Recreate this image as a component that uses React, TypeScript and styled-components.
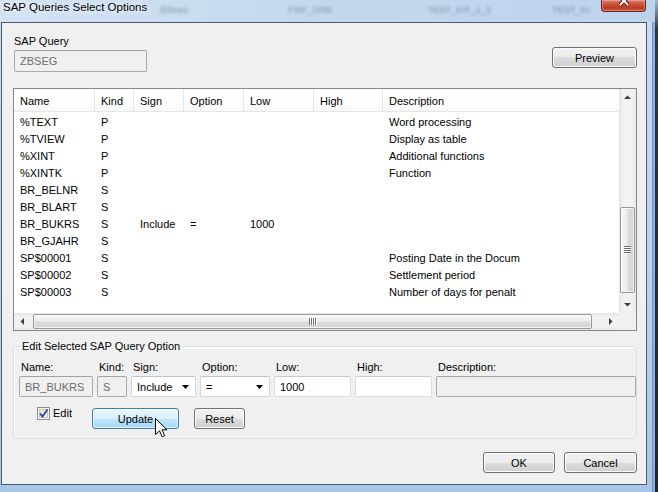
import React from 'react';
import styled, { createGlobalStyle } from 'styled-components';

const GlobalStyle = createGlobalStyle`
  * { box-sizing: border-box; }
  html, body { margin: 0; padding: 0; background: #232b33; }
  body {
    font-family: "Liberation Sans", Arial, sans-serif;
    font-size: 11px;
    color: #000;
  }
`;

const Desktop = styled.div`
  width: 658px;
  height: 492px;
  overflow: hidden;
  display: flex;
  background: linear-gradient(180deg, #9fb6cc 0%, #2d3741 6%, #20272e 100%);
`;

const Window = styled.div`
  width: 655px;
  height: 492px;
  flex: none;
  display: flex;
  flex-direction: column;
  background: linear-gradient(180deg, #c8dcf1 0%, #bad2ec 60%, #a8c6e7 100%);
  box-shadow: inset -2px 0 0 #8db1da, inset -3px 0 0 #6d95c6;
`;

const TitleBar = styled.div`
  height: 22px;
  flex: none;
  display: flex;
  align-items: flex-start;
  padding: 0 9px 0 3px;
  background: linear-gradient(90deg, #d2e3f4 0%, #c4d9ef 45%, #bcd3ec 100%);
`;

const Title = styled.span`
  font-size: 11.5px;
  line-height: 14px;
  margin-top: 0;
  white-space: nowrap;
  text-shadow: 0 0 5px #fff, 0 0 9px rgba(255, 255, 255, 0.8);
`;

const Ghost = styled.span<{ $gap: number }>`
  margin-left: ${(p) => p.$gap}px;
  margin-top: 5px;
  font-size: 9px;
  line-height: 10px;
  color: rgba(60, 80, 105, 0.5);
  filter: blur(1.4px);
  white-space: nowrap;
`;

const Spacer = styled.div`
  flex: 1;
`;

const CloseButton = styled.div`
  width: 45px;
  height: 12px;
  flex: none;
  display: flex;
  justify-content: center;
  align-items: flex-start;
  overflow: hidden;
  border: 1px solid #6c2518;
  border-top: none;
  border-radius: 0 0 4px 4px;
  background: linear-gradient(180deg, #d9806c 0%, #cc563f 35%, #bd3b24 70%, #d0593e 100%);
  box-shadow: inset 0 0 0 1px rgba(255, 220, 210, 0.35);
`;

const Client = styled.div`
  margin: 0 8px 0 1px;
  height: 463px;
  flex: none;
  border: 1px solid #4b5c70;
  background: #f0f0f0;
  padding: 12px 9px 0 11px;
  display: flex;
  flex-direction: column;
`;

const TopRow = styled.div`
  display: flex;
  justify-content: space-between;
  align-items: flex-start;
`;

const QueryField = styled.div`
  display: flex;
  flex-direction: column;
  gap: 2px;
`;

const Caption = styled.span`
  line-height: 13px;
  white-space: nowrap;
  padding-left: 1px;
`;

const TextBox = styled.div<{ $disabled?: boolean; $w?: number }>`
  height: ${(p) => (p.$w ? 22 : 21)}px;
  width: ${(p) => (p.$w ? `${p.$w}px` : 'auto')};
  margin-left: ${(p) => (p.$w ? 1 : 0)}px;
  padding-left: 5px;
  display: flex;
  align-items: center;
  white-space: nowrap;
  overflow: hidden;
  border-radius: 2px;
  border: 1px solid ${(p) => (p.$disabled ? '#a9a9a9' : '#dadde2')};
  border-top-color: ${(p) => (p.$disabled ? '#a2a2a2' : '#c6cad0')};
  background: ${(p) => (p.$disabled ? '#f0f0f0' : '#fff')};
  color: ${(p) => (p.$disabled ? '#6d6d6d' : '#000')};
`;

const Button = styled.div<{ $w: number; $hot?: boolean }>`
  width: ${(p) => p.$w}px;
  height: 21px;
  flex: none;
  display: flex;
  align-items: center;
  justify-content: center;
  border-radius: 3px;
  border: 1px solid ${(p) => (p.$hot ? '#3c7fb1' : '#707070')};
  background: ${(p) =>
    p.$hot
      ? 'linear-gradient(180deg, #eaf6fd 0%, #d9f0fc 50%, #bee6fd 50%, #a7d9f5 100%)'
      : 'linear-gradient(180deg, #f2f2f2 0%, #ebebeb 50%, #dddddd 50%, #cfcfcf 100%)'};
  box-shadow: inset 0 0 0 1px ${(p) => (p.$hot ? 'rgba(255,255,255,0.6)' : '#fcfcfc')};
`;

const PreviewButton = styled(Button)`
  margin-top: 12px;
`;

/* list view */

const COLUMNS = '81px 39px 50px 60px 70px 69px 1fr';

const ListView = styled.div`
  margin-top: 16px;
  height: 243px;
  flex: none;
  border: 1px solid #828790;
  background: #fff;
  display: grid;
  grid-template-columns: 1fr 17px;
  grid-template-rows: 1fr 17px;
`;

const ListBody = styled.div`
  overflow: hidden;
`;

const HeaderRow = styled.div`
  display: grid;
  grid-template-columns: ${COLUMNS};
  height: 23px;
  border-bottom: 1px solid #e5e5e5;
  background: linear-gradient(180deg, #ffffff 0%, #ffffff 55%, #f7f8f9 100%);
`;

const HeaderCell = styled.div<{ $last?: boolean }>`
  padding: 6px 0 0 6px;
  line-height: 13px;
  white-space: nowrap;
  border-right: ${(p) => (p.$last ? 'none' : '1px solid #e5e5e5')};
`;

const Rows = styled.div`
  padding-top: 2px;
`;

const Row = styled.div`
  display: grid;
  grid-template-columns: ${COLUMNS};
  height: 17px;
  line-height: 17px;
`;

const Cell = styled.div`
  padding-left: 6px;
  white-space: nowrap;
  overflow: hidden;
`;

const VScroll = styled.div`
  display: flex;
  flex-direction: column;
  background: linear-gradient(90deg, #e4e4e4 0%, #f2f2f2 25%, #f2f2f2 75%, #e9e9e9 100%);
`;

const HScroll = styled.div`
  display: flex;
  background: linear-gradient(180deg, #e4e4e4 0%, #f2f2f2 25%, #f2f2f2 75%, #e9e9e9 100%);
`;

const ArrowBox = styled.div`
  width: 17px;
  height: 17px;
  flex: none;
  display: flex;
  align-items: center;
  justify-content: center;
`;

const VTrack = styled.div`
  flex: 1;
  padding: 101px 1px 0;
`;

const HTrack = styled.div`
  flex: 1;
  padding: 1px 0 0 2px;
`;

const Thumb = styled.div<{ $vertical?: boolean }>`
  width: ${(p) => (p.$vertical ? '15px' : '559px')};
  height: ${(p) => (p.$vertical ? '86px' : '15px')};
  display: flex;
  align-items: center;
  justify-content: center;
  border: 1px solid #979797;
  border-radius: 2px;
  background: ${(p) =>
    p.$vertical
      ? 'linear-gradient(90deg, #f6f6f6 0%, #ececec 45%, #dcdcdc 55%, #d3d3d3 100%)'
      : 'linear-gradient(180deg, #f6f6f6 0%, #ececec 45%, #dcdcdc 55%, #d3d3d3 100%)'};
  box-shadow: inset 0 0 0 1px rgba(255, 255, 255, 0.7);
`;

const Corner = styled.div`
  background: #f0f0f0;
`;

const ArrowSvg = styled.svg<{ $rot: number }>`
  transform: rotate(${(p) => p.$rot}deg);
`;

/* edit group */

const Group = styled.fieldset`
  margin: 9px 0 0;
  padding: 8px 0 9px 5px;
  border: 1px solid #d5dfe5;
  border-radius: 3px;
  min-width: 0;
  box-shadow: inset 1px 1px 0 #fff;
`;

const Legend = styled.legend`
  padding: 0 2px;
  margin-left: 1px;
  line-height: 13px;
`;

const FieldGrid = styled.div`
  display: grid;
  grid-template-columns: 74px 30px 65px 70px 77px 77px 1fr;
  grid-template-rows: 13px 21px;
  column-gap: 4px;
  row-gap: 2px;
`;

const FieldLabel = styled.span`
  padding-left: 2px;
  line-height: 13px;
  white-space: nowrap;
`;

const Combo = styled.div`
  height: 21px;
  display: flex;
  align-items: center;
  justify-content: space-between;
  padding: 0 6px 0 5px;
  border: 1px solid #d3d6db;
  border-top-color: #bfc3c9;
  border-radius: 2px;
  background: #fff;
  white-space: nowrap;
`;

const ButtonRow = styled.div`
  position: relative;
  display: flex;
  align-items: flex-start;
  margin-top: 10px;
  height: 22px;
`;

const CheckLabel = styled.div`
  width: 55px;
  margin-left: 18px;
  display: flex;
  align-items: center;
  gap: 3px;
  line-height: 13px;
`;

const RowButton = styled(Button)<{ $gap?: number }>`
  margin: 1px 0 0 ${(p) => p.$gap ?? 0}px;
`;

const Cursor = styled.svg`
  position: absolute;
  left: 136px;
  top: 11px;
`;

const Footer = styled.div`
  display: flex;
  justify-content: flex-end;
  gap: 9px;
  margin-top: 13px;
`;

type Dir = 'up' | 'down' | 'left' | 'right';
const ROT: Record<Dir, number> = { up: 0, right: 90, down: 180, left: 270 };

function Arrow({ dir }: { dir: Dir }) {
  return (
    <ArrowBox>
      <ArrowSvg $rot={ROT[dir]} width="7" height="7" viewBox="0 0 7 7">
        <path d="M0 5 L3.5 1.5 L7 5 Z" fill="#3f3f3f" />
      </ArrowSvg>
    </ArrowBox>
  );
}

function Grip({ vertical }: { vertical?: boolean }) {
  const lines = [0, 2, 4, 6];
  return vertical ? (
    <svg width="7" height="8" viewBox="0 0 7 8">
      {lines.map((y) => (
        <React.Fragment key={y}>
          <rect x="0" y={y} width="7" height="1" fill="#6f6f6f" />
          <rect x="0" y={y + 1} width="7" height="1" fill="#fdfdfd" />
        </React.Fragment>
      ))}
    </svg>
  ) : (
    <svg width="8" height="7" viewBox="0 0 8 7">
      {lines.map((x) => (
        <React.Fragment key={x}>
          <rect x={x} y="0" width="1" height="7" fill="#6f6f6f" />
          <rect x={x + 1} y="0" width="1" height="7" fill="#fdfdfd" />
        </React.Fragment>
      ))}
    </svg>
  );
}

const HEADERS = ['Name', 'Kind', 'Sign', 'Option', 'Low', 'High', 'Description'];

const ROWS: string[][] = [
  ['%TEXT', 'P', '', '', '', '', 'Word processing'],
  ['%TVIEW', 'P', '', '', '', '', 'Display as table'],
  ['%XINT', 'P', '', '', '', '', 'Additional functions'],
  ['%XINTK', 'P', '', '', '', '', 'Function'],
  ['BR_BELNR', 'S', '', '', '', '', ''],
  ['BR_BLART', 'S', '', '', '', '', ''],
  ['BR_BUKRS', 'S', 'Include', '=', '1000', '', ''],
  ['BR_GJAHR', 'S', '', '', '', '', ''],
  ['SP$00001', 'S', '', '', '', '', 'Posting Date in the Docum'],
  ['SP$00002', 'S', '', '', '', '', 'Settlement period'],
  ['SP$00003', 'S', '', '', '', '', 'Number of days for penalt'],
];

function DropArrow() {
  return (
    <svg width="7" height="4" viewBox="0 0 7 4">
      <path d="M0 0 L7 0 L3.5 4 Z" fill="#000" />
    </svg>
  );
}

export default function App() {
  return (
    <Desktop>
      <GlobalStyle />
      <Window>
        <TitleBar>
          <Title>SAP Queries Select Options</Title>
          <Ghost $gap={12}>@bnex</Ghost>
          <Ghost $gap={100}>FWF_GRB</Ghost>
          <Ghost $gap={96}>TEST_IHT_1_3</Ghost>
          <Ghost $gap={62}>TEST_IH</Ghost>
          <Spacer />
          <CloseButton>
            <svg width="14" height="9" viewBox="0 0 14 9">
              <path d="M3 -3 L11 5 M11 -3 L3 5" stroke="#5a1a10" strokeWidth="4" />
              <path d="M3 -3 L11 5 M11 -3 L3 5" stroke="#fff" strokeWidth="2" />
            </svg>
          </CloseButton>
        </TitleBar>

        <Client>
          <TopRow>
            <QueryField>
              <Caption>SAP Query</Caption>
              <TextBox $disabled $w={133}>ZBSEG</TextBox>
            </QueryField>
            <PreviewButton $w={85}>Preview</PreviewButton>
          </TopRow>

          <ListView>
            <ListBody>
              <HeaderRow>
                {HEADERS.map((h, i) => (
                  <HeaderCell key={h} $last={i === HEADERS.length - 1}>
                    {h}
                  </HeaderCell>
                ))}
              </HeaderRow>
              <Rows>
                {ROWS.map((r) => (
                  <Row key={r[0]}>
                    {r.map((c, i) => (
                      <Cell key={i}>{c}</Cell>
                    ))}
                  </Row>
                ))}
              </Rows>
            </ListBody>
            <VScroll>
              <Arrow dir="up" />
              <VTrack>
                <Thumb $vertical>
                  <Grip vertical />
                </Thumb>
              </VTrack>
              <Arrow dir="down" />
            </VScroll>
            <HScroll>
              <Arrow dir="left" />
              <HTrack>
                <Thumb>
                  <Grip />
                </Thumb>
              </HTrack>
              <Arrow dir="right" />
            </HScroll>
            <Corner />
          </ListView>

          <Group>
            <Legend>Edit Selected SAP Query Option</Legend>
            <FieldGrid>
              <FieldLabel>Name:</FieldLabel>
              <FieldLabel>Kind:</FieldLabel>
              <FieldLabel>Sign:</FieldLabel>
              <FieldLabel>Option:</FieldLabel>
              <FieldLabel>Low:</FieldLabel>
              <FieldLabel>High:</FieldLabel>
              <FieldLabel>Description:</FieldLabel>
              <TextBox $disabled>BR_BUKRS</TextBox>
              <TextBox $disabled>S</TextBox>
              <Combo>
                Include
                <DropArrow />
              </Combo>
              <Combo>
                =
                <DropArrow />
              </Combo>
              <TextBox>1000</TextBox>
              <TextBox />
              <TextBox $disabled />
            </FieldGrid>
            <ButtonRow>
              <CheckLabel>
                <svg width="13" height="13" viewBox="0 0 13 13">
                  <defs>
                    <linearGradient id="cb" x1="0" y1="0" x2="1" y2="1">
                      <stop offset="0" stopColor="#dcdcdc" />
                      <stop offset="1" stopColor="#fbfbfb" />
                    </linearGradient>
                  </defs>
                  <rect x="0.5" y="0.5" width="12" height="12" fill="#f4f4f4" stroke="#8e8f8f" />
                  <rect x="2.5" y="2.5" width="8" height="8" fill="url(#cb)" stroke="#c7c7c7" />
                  <path d="M3 6.5 L5.5 9.5 L10.5 2.5" fill="none" stroke="#27439b" strokeWidth="1.8" />
                </svg>
                Edit
              </CheckLabel>
              <RowButton $w={87} $hot>
                Update
              </RowButton>
              <RowButton $w={51} $gap={15}>
                Reset
              </RowButton>
              <Cursor width="13" height="20" viewBox="0 0 13 20">
                <path
                  d="M0.5 0.5 L0.5 16.5 L4.5 12.8 L7.2 18.8 L9.6 17.7 L7 11.8 L12 11.8 Z"
                  fill="#fff"
                  stroke="#000"
                  strokeWidth="1"
                  strokeLinejoin="miter"
                />
              </Cursor>
            </ButtonRow>
          </Group>

          <Footer>
            <Button $w={72}>OK</Button>
            <Button $w={73}>Cancel</Button>
          </Footer>
        </Client>
      </Window>
    </Desktop>
  );
}
